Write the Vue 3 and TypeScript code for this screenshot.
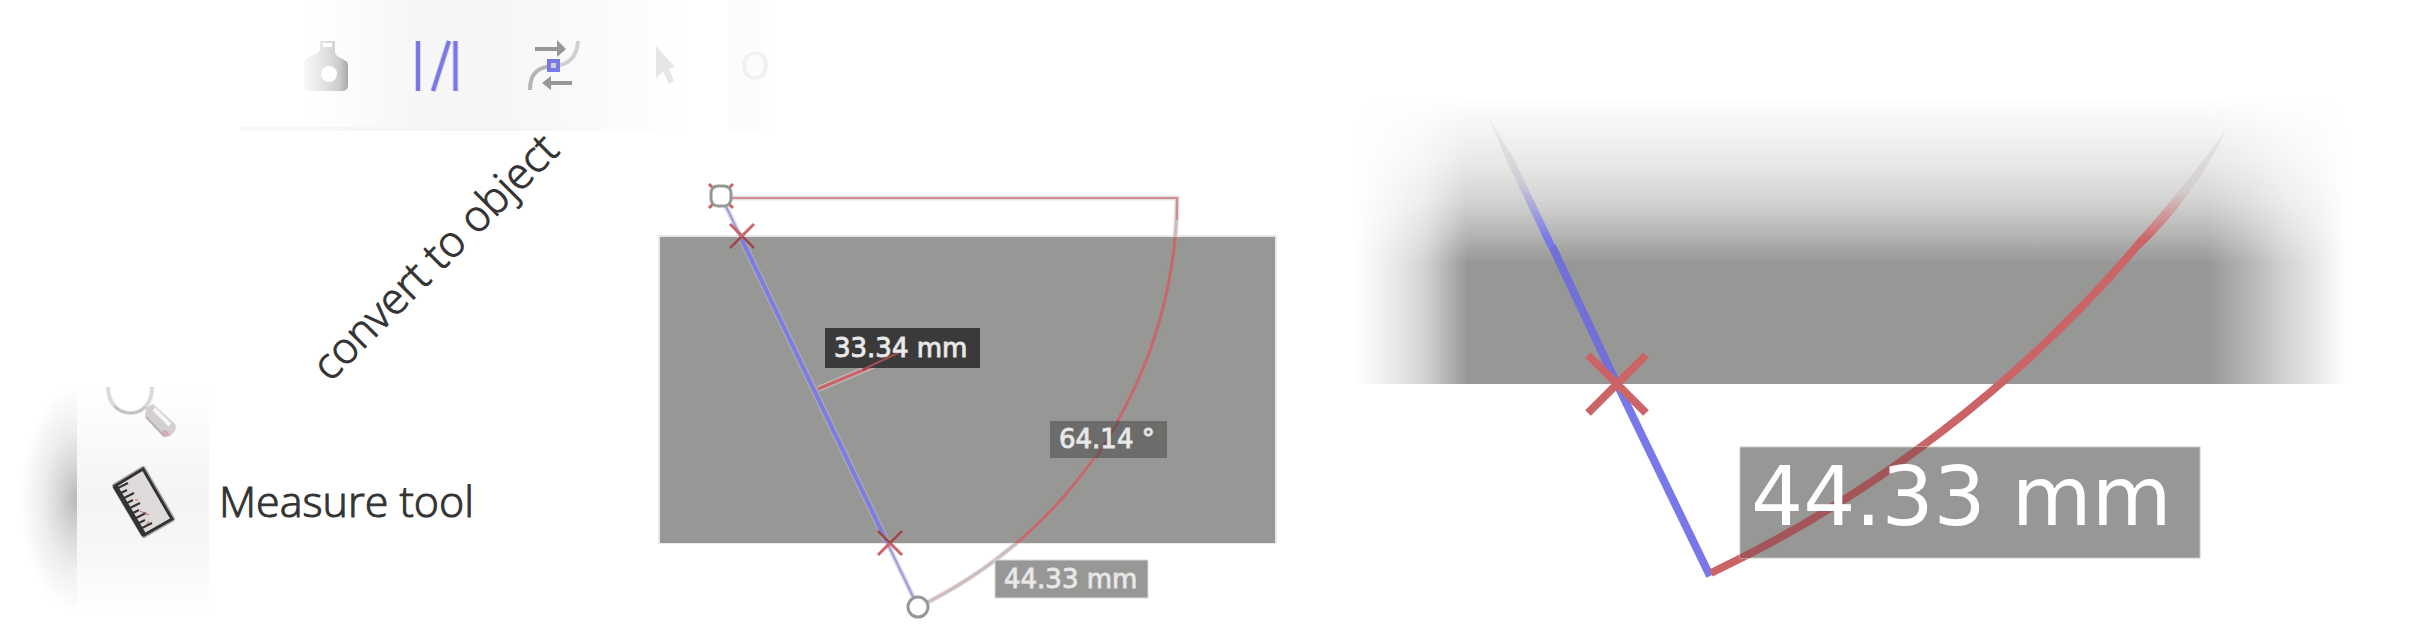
<script setup lang="ts">
interface Mark {
  x: number
  y: number
  arm: number
}

const marks: Mark[] = [
  { x: 742, y: 236, arm: 12 },
  { x: 890, y: 543, arm: 12 },
]

const cross = (m: Mark): string =>
  `M${m.x - m.arm} ${m.y - m.arm}L${m.x + m.arm} ${m.y + m.arm}M${m.x + m.arm} ${m.y - m.arm}L${m.x - m.arm} ${m.y + m.arm}`

const ticks: number[] = [0, 1, 2, 3, 4, 5, 6, 7, 8]
</script>

<template>
  <main class="page">
    <section class="workspace">
      <header class="toolbar">
        <button class="tool" type="button" aria-label="Paint bottle">
          <svg viewBox="272 0 112 131" width="112" height="131">
            <defs>
              <linearGradient id="bottle" x1="0" x2="1" y1="0" y2="0">
                <stop offset="0" stop-color="#f8f8f8" />
                <stop offset=".45" stop-color="#e4e3e3" />
                <stop offset=".8" stop-color="#cfcbcc" />
                <stop offset="1" stop-color="#a9a8a8" />
              </linearGradient>
            </defs>
            <path
              d="M320 41h15v10q0 4 4 6l7 4q2 1 2 4v20q0 6-6 6h-34q-4 0-4-6V65q0-6 5-8l7-3q4-2 4-6z"
              fill="url(#bottle)"
            />
            <rect x="323" y="43" width="9" height="4" fill="#fff" />
            <circle cx="329" cy="74" r="8" fill="#fff" />
          </svg>
        </button>
        <button class="tool" type="button" aria-label="Measure between items">
          <svg viewBox="384 0 112 131" width="112" height="131">
            <path d="M418 41V91M433 91L449 41M455.500 41V91" stroke="#d8d6de" stroke-width="6" />
            <path d="M418 41V91M433 91L449 41M455.500 41V91" stroke="#7878e8" stroke-width="4" />
          </svg>
        </button>
        <button class="tool" type="button" aria-label="Convert to object">
          <svg viewBox="496 0 112 131" width="112" height="131">
            <path d="M530 90C530 74 537 67 553 66" fill="none" stroke="#b7b4b4" stroke-width="4" />
            <path d="M553 66C570 65 577 56 578 41" fill="none" stroke="#d3cfd0" stroke-width="4" />
            <path d="M535 47h22v-7l9 9-9 8v-6h-22zM572 81h-21v-5l-9 7 9 7v-5h21z" fill="#979795" />
            <rect x="549" y="61" width="9" height="9" fill="#d3cfd0" stroke="#7878e8" stroke-width="4" />
          </svg>
        </button>
        <button class="tool" type="button" aria-label="Select">
          <svg viewBox="608 0 112 131" width="112" height="131">
            <path d="M656 46l19 21-6 2 5 12-5 3-6-13-7 7z" fill="#e6e6e6" />
          </svg>
        </button>
        <span class="more">O</span>
      </header>

      <div class="body">
        <div class="side">
          <svg class="caption" viewBox="0 131 620 256">
            <text class="label" transform="translate(330 383) rotate(-45)">convert to object</text>
          </svg>
          <div class="row">
            <div class="shade"></div>
            <div class="toolbox">
              <button class="tool" type="button" aria-label="Zoom">
                <svg viewBox="77 387 132 72" width="132" height="72">
                  <path
                    d="M108 387C108 404 119 413 131 413S152 403 152 387"
                    fill="#fff"
                    stroke="#dcdada"
                    stroke-width="4"
                  />
                  <path d="M114 406q7 7 16 7t15-6" fill="none" stroke="#c0bebe" stroke-width="2" />
                  <path d="M146 408l7-4 22 20q2 4-1 8-3 5-9 5l-20-20z" fill="#d3cfd0" />
                  <path d="M154 409l16 16" stroke="#f6f6f6" stroke-width="4" />
                  <path d="M146 417l18 19 5-2" fill="none" stroke="#b3b3b3" stroke-width="2" />
                  <circle cx="165" cy="433" r="3" fill="#d7aaad" />
                </svg>
              </button>
              <button id="measure" class="tool" type="button" aria-label="Measure tool">
                <svg viewBox="77 459 132 88" width="132" height="88">
                  <path d="M143 469L172 519 144 535 115 486z" fill="#dedada" stroke="#aaa" stroke-width="6" stroke-linejoin="round" />
                  <path d="M143 469L172 519 144 535 115 486z" fill="#dedada" stroke="#333" stroke-width="3" />
                  <path d="M115 486L144 535" stroke="#333" stroke-width="5" />
                  <g stroke="#333" stroke-width="2">
                    <path
                      v-for="t in ticks"
                      :key="t"
                      :d="`M${118 + t * 3} ${488 + t * 5}l${t % 2 ? 6 : 10} -${t % 2 ? 3 : 5}`"
                    />
                  </g>
                  <path d="M135 500l3 0M140 511l9 4M146 525l3-4" stroke="#cb6467" stroke-width="1" />
                </svg>
              </button>
            </div>
            <label class="name" for="measure">Measure tool</label>
          </div>
        </div>

        <svg class="canvas" viewBox="620 131 720 494">
          <defs>
            <clipPath id="inside"><rect x="660" y="237" width="615" height="306" /></clipPath>
          </defs>
          <rect x="658" y="235" width="619" height="309" fill="#e8e8e8" />
          <rect x="660" y="237" width="615" height="306" fill="#979795" />

          <g fill="none">
            <path d="M721 198H1177A456 456 0 0 1 918 607" stroke="#e4e1e1" stroke-width="5" />
            <path d="M918 607A456 456 0 0 0 1177 198" stroke="#cfbcbd" stroke-width="3" />
            <path d="M721 198H1177V220" stroke="#d08e90" stroke-width="2" />
            <path d="M721 196L918 607" stroke="#dddbe2" stroke-width="5" />
            <path d="M721 196L918 607" stroke="#9a9ae0" stroke-width="2" />
            <g clip-path="url(#inside)">
              <path d="M1177 198A456 456 0 0 1 918 607" stroke="#979795" stroke-width="6" />
              <path d="M1177 198A456 456 0 0 1 918 607" stroke="#c8686a" stroke-width="3" />
              <path d="M721 196L918 607" stroke="#a8a8ac" stroke-width="7" />
              <path d="M721 196L918 607" stroke="#7c7ce2" stroke-width="4" />
            </g>
            <path v-for="m in marks" :key="m.x" :d="cross(m)" stroke="#cb6467" stroke-width="3" />
            <g clip-path="url(#inside)">
              <path v-for="m in marks" :key="m.x" :d="cross(m)" stroke="#8c4a4b" stroke-width="2" />
            </g>
            <path d="M818 389L880 363" stroke="#bdb9b9" stroke-width="6" />
            <path d="M818 389L880 363" stroke="#cb6467" stroke-width="3" />
            <path d="M709 184L733 208M733 184L709 208" stroke="#cb6467" stroke-width="3" />
          </g>
          <rect x="711" y="186" width="20" height="20" rx="7" class="handle" />
          <circle cx="918" cy="607" r="10" class="handle" />

          <rect x="825" y="328" width="155" height="40" fill="#3a3a3a" />
          <path d="M862 370L900 352" stroke="#9c5052" stroke-width="2" />
          <text class="measure" x="834" y="357">33.34 mm</text>
          <rect x="1050" y="421" width="117" height="37" fill="#6c6c6b" />
          <path d="M1119 421L1096 458" stroke="#7c5455" stroke-width="3" />
          <text class="measure" x="1059" y="448">64.14 °</text>
          <rect x="995" y="560" width="153" height="38" fill="#979795" stroke="#dcdcdc" />
          <text class="measure" x="1004" y="588">44.33 mm</text>
        </svg>
      </div>
    </section>

    <svg class="detail" viewBox="1340 0 1070 625">
      <defs>
        <linearGradient id="rise" x1="0" x2="0" y1="0" y2="1">
          <stop offset="0" stop-color="#979795" stop-opacity="0" />
          <stop offset=".22" stop-color="#979795" stop-opacity=".21" />
          <stop offset=".36" stop-color="#979795" stop-opacity=".42" />
          <stop offset=".48" stop-color="#979795" stop-opacity=".72" />
          <stop offset=".58" stop-color="#979795" />
          <stop offset="1" stop-color="#979795" />
        </linearGradient>
        <linearGradient id="span" gradientUnits="userSpaceOnUse" x1="1355" x2="2347" y1="0" y2="0">
          <stop offset="0" stop-color="#fff" stop-opacity="0" />
          <stop offset=".04" stop-color="#fff" stop-opacity=".21" />
          <stop offset=".07" stop-color="#fff" stop-opacity=".42" />
          <stop offset=".093" stop-color="#fff" stop-opacity=".72" />
          <stop offset=".113" stop-color="#fff" />
          <stop offset=".859" stop-color="#fff" />
          <stop offset=".9" stop-color="#fff" stop-opacity=".72" />
          <stop offset=".938" stop-color="#fff" stop-opacity=".42" />
          <stop offset=".972" stop-color="#fff" stop-opacity=".21" />
          <stop offset="1" stop-color="#fff" stop-opacity="0" />
        </linearGradient>
        <mask id="sides">
          <rect x="1355" y="98" width="992" height="286" fill="url(#span)" />
        </mask>
        <linearGradient id="blue" gradientUnits="userSpaceOnUse" x1="0" x2="0" y1="120" y2="240">
          <stop offset="0" stop-color="#ececec" />
          <stop offset=".5" stop-color="#d0cdd4" />
          <stop offset="1" stop-color="#7878e8" />
        </linearGradient>
        <linearGradient id="red" gradientUnits="userSpaceOnUse" x1="0" x2="0" y1="130" y2="240">
          <stop offset="0" stop-color="#e8e8e8" />
          <stop offset=".55" stop-color="#d2cccd" />
          <stop offset="1" stop-color="#cb6467" />
        </linearGradient>
        <clipPath id="tag"><rect x="1740" y="447" width="460" height="111" /></clipPath>
      </defs>
      <rect x="1355" y="98" width="992" height="286" fill="url(#rise)" mask="url(#sides)" />

      <path d="M1490 120L1513 157 1555 245 1548 248 1505 157z" fill="url(#blue)" />
      <path d="M1552 246L1617 384" stroke="#7070d8" stroke-width="8" />
      <path d="M1617 384L1710 576" stroke="#7878e8" stroke-width="8" />
      <path d="M1711 573A1290 1290 0 0 0 2137 246" fill="none" stroke="#cb6467" stroke-width="8" />
      <path d="M2134 243Q2178 195 2226 130Q2196 195 2140 249z" fill="url(#red)" />
      <path d="M1588 355L1646 413M1646 355L1588 413" stroke="#cb6467" stroke-width="8" />

      <rect x="1740" y="447" width="460" height="111" fill="#979795" stroke="#c8c8c8" />
      <path
        d="M1711 573A1290 1290 0 0 0 2137 246"
        clip-path="url(#tag)"
        fill="none"
        stroke="#a45557"
        stroke-width="8"
      />
      <text class="measure big" x="1751" y="525">44.33 mm</text>
    </svg>
  </main>
</template>

<style>
body {
  margin: 0;
  background: #fefefe;
}
</style>

<style scoped>
.page {
  display: grid;
  grid-template-columns: 1340fr 1070fr;
  align-items: start;
  background: #fff;
  color: #333;
  font-family: "Open Sans", "Noto Sans", sans-serif;
  font-weight: 300;
}
svg {
  display: block;
}
.toolbar {
  display: flex;
  align-items: center;
  margin-left: 240px;
  padding-left: 32px;
  width: 500px;
  background:
    linear-gradient(90deg, #f8f8f8, #f3f3f3 60%, #fff) left bottom / 440px 4px no-repeat,
    linear-gradient(90deg, #fbfbfb, #fefefe) 488px 0 / 44px 131px no-repeat,
    linear-gradient(90deg, #fff 70px, #f7f7f7 170px, #f6f6f6 250px, #fbfbfb 370px, #fff 444px);
}
.tool {
  display: block;
  flex: none;
  margin: 0;
  padding: 0;
  border: 0;
  background: none;
}
.more {
  margin-left: 20px;
  color: #f1f1f1;
  font: 38px/48px "DejaVu Sans", sans-serif;
}
.body {
  display: grid;
  grid-template-columns: 620fr 720fr;
  align-items: start;
}
.caption,
.canvas,
.detail {
  width: 100%;
  height: auto;
}
.caption {
  overflow: visible;
}
.label {
  fill: #333;
  stroke: #333;
  stroke-width: 1px;
  font-size: 43px;
}
.row {
  display: flex;
  padding-left: 20px;
}
.shade {
  width: 57px;
  background: radial-gradient(ellipse 57px 112px at 100% 112px, #b9b8b8, #d8d5d5 30%, #ececec 58%, #fff);
}
.toolbox {
  width: 132px;
  padding-bottom: 66px;
  background: linear-gradient(#fff, #f8f8f8 30%, #f4f4f4 50%, #f8f8f8 75%, #fff);
}
.name {
  margin: 84px 0 0 10px;
  font-size: 43px;
  line-height: 60px;
  white-space: nowrap;
  -webkit-text-stroke: 1px #333;
}
.handle {
  fill: #fff;
  stroke: #979795;
  stroke-width: 3px;
}
.measure {
  fill: #f0f0f0;
  stroke: #e0e0e0;
  stroke-width: 1px;
  font-family: "DejaVu Sans", sans-serif;
  font-size: 26px;
  font-weight: 400;
}
.big {
  fill: #fff;
  stroke: none;
  font-size: 82px;
}
</style>
